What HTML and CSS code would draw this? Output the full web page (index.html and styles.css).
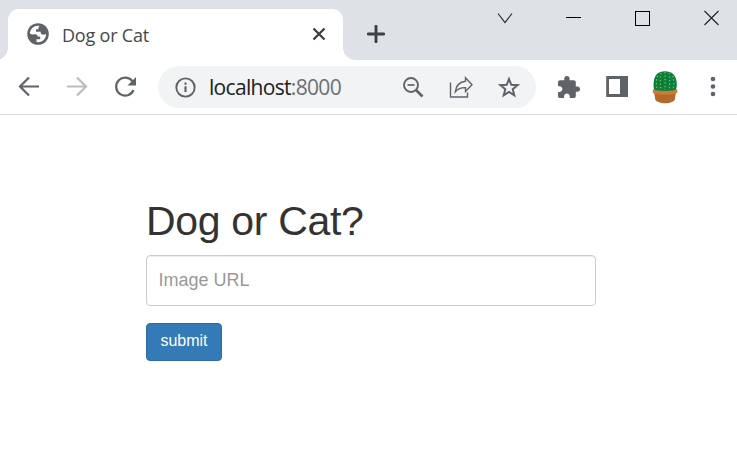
FILE: index.html
```html
<!DOCTYPE html>
<html lang="en">
<head>
<meta charset="utf-8">
<title>Dog or Cat</title>
<link rel="stylesheet" href="styles.css">
</head>
<body>
<div class="browser">
  <header class="strip">
    <div class="flare flare-left"></div>
    <div class="tab">
      <svg class="favicon" viewBox="0 0 22 22"><circle cx="11" cy="11" r="10.800" fill="#5f6368"/><path d="M12.500 2.800C7.500 2 3.500 5.200 2.800 10.200c1.500 1.300 3.500 1.400 5 1.100 1.800-.2 3.200.8 2.700 2.200h2.700v2.700H9.500v2.800c5.500 1 9.800-3.300 9.500-8.300-1 .9-2.400 1.200-3.700.7-1.400-.5-1.800-1.500-1.800-2.700H9V6.300h2.300c0-1.200.4-2.600 1.200-3.500z" fill="#fff"/></svg>
      <span class="tab-title">Dog or Cat</span>
      <svg class="tab-close" viewBox="0 0 14 14"><path d="M1.500 1.500l11 11M12.500 1.500l-11 11" stroke="#3c4043" stroke-width="2.300"/></svg>
    </div>
    <div class="flare flare-right"></div>
    <svg class="new-tab" viewBox="0 0 18 18"><path d="M9 1.200v15.600M1.200 9h15.600" stroke="#3c4043" stroke-width="2.900" stroke-linecap="round"/></svg>
    <div class="window-controls">
      <svg viewBox="0 0 16 16"><path d="M1 3.500l7 9 7-9" fill="none" stroke="#222" stroke-width="1.100"/></svg>
      <svg viewBox="0 0 16 16" shape-rendering="crispEdges"><path d="M0 7.500h15" stroke="#000"/></svg>
      <svg viewBox="0 0 16 16" shape-rendering="crispEdges"><path d="M.5 1.500h14v14H.5z" fill="none" stroke="#000"/></svg>
      <svg viewBox="0 0 16 16"><path d="M.5 1l14 14M14.500 1l-14 14" stroke="#222" stroke-width="1.100"/></svg>
    </div>
  </header>
  <nav class="toolbar">
    <div class="slot"><svg class="icon" viewBox="0 0 30 30"><path d="M25 14.500H6.500M15 5.500l-9 9 9 9" fill="none" stroke="#5f6368" stroke-width="2.200"/></svg></div>
    <div class="slot"><svg class="icon" viewBox="0 0 30 30"><path d="M5 14.500h18.500M15 5.500l9 9-9 9" fill="none" stroke="#babcbe" stroke-width="2.200"/></svg></div>
    <div class="slot"><svg class="icon" viewBox="0 0 30 30"><path d="M22.600 9.500A9 9 0 1 0 23.500 18" fill="none" stroke="#5f6368" stroke-width="2.200"/><path d="M26 5v8.500h-8.500z" fill="#5f6368"/></svg></div>
    <div class="omnibox">
      <svg class="info" viewBox="0 0 22 22"><circle cx="11" cy="11" r="9.600" fill="none" stroke="#5f6368" stroke-width="2"/><path d="M11 9.800v6M11 5.800v2.300" stroke="#5f6368" stroke-width="2.200"/></svg>
      <span class="url">localhost<span class="port">:8000</span></span>
      <div class="slot"><svg class="icon" viewBox="0 0 30 30"><g fill="none" stroke="#5f6368"><circle cx="13" cy="13" r="7" stroke-width="1.900"/><path d="M18 18l6.500 6.500" stroke-width="2.600"/><path d="M9.500 13h7" stroke-width="1.700"/></g></svg></div>
      <div class="slot"><svg class="icon" viewBox="0 0 30 30"><g fill="none" stroke="#5f6368" stroke-width="1.400"><path d="M4.500 10.500V25h17v-4.500"/><path d="M19.500 5.800l6.500 7-6.500 6.800v-4c-4.500-.1-7.700 1-10.200 4.200.8-6.300 3.800-10 10.200-10.600z"/></g></svg></div>
      <div class="slot"><svg class="icon" viewBox="0 0 30 30"><path d="M15 7l2.300 5.800 6.300.4-4.900 4 1.600 6.200-5.300-3.400-5.300 3.400 1.600-6.200-4.900-4 6.300-.4z" fill="none" stroke="#5f6368" stroke-width="2"/></svg></div>
    </div>
    <div class="slot"><svg class="puzzle" viewBox="2 1 21 21"><path fill="#5f6368" d="M20.500 11H19V7c0-1.100-.9-2-2-2h-4V3.500a2.500 2.500 0 0 0-5 0V5H4c-1.100 0-1.990.9-1.990 2v3.800H3.500c1.490 0 2.700 1.210 2.700 2.700s-1.210 2.700-2.700 2.700H2V20c0 1.100.9 2 2 2h3.800v-1.500c0-1.490 1.210-2.700 2.700-2.700s2.700 1.210 2.700 2.700V22H17c1.100 0 2-.9 2-2v-4h1.500a2.500 2.500 0 0 0 0-5z"/></svg></div>
    <div class="slot"><svg class="panel" viewBox="0 0 22 22"><path fill="#5f6368" fill-rule="evenodd" d="M.2 0H22v21H.2zM3 3v15h11V3z"/></svg></div>
    <div class="slot"><svg class="cactus" viewBox="0 0 26 34"><path d="M2.500 21c-1-3-1.200-6-.7-9.500C2.500 5 6 1.200 13 1.200S23.800 5 24.600 11.500c.5 3.500 0 6.500-1 9.500z" fill="#0b7f3e"/><g fill="none" stroke="#a3c44f" stroke-width="1.100" stroke-dasharray="1.300 2.200"><path d="M13 2v18M9 3c-1 4-1 11 0 17M17 3c1 4 1 11 0 17M5.500 6C4 10 4 16 5.500 20M20.700 6c1.500 4 1.500 10 0 14"/></g><path d="M2 22h22l-1.200 7.500c-2.500 5-17 5-19.500 0z" fill="#b4682a"/><path d="M.8 19c3 2.500 21.400 2.500 24.400 0v3.700c-3 2.800-21.400 2.800-24.400 0z" fill="#c97c35"/></svg></div>
    <div class="slot"><svg class="icon" viewBox="0 0 30 30" fill="#5f6368"><circle cx="15" cy="7" r="2.300"/><circle cx="15" cy="14.500" r="2.300"/><circle cx="15" cy="22" r="2.300"/></svg></div>
  </nav>
  <main class="page">
    <h1>Dog or Cat?</h1>
    <input class="field" type="text" placeholder="Image URL">
    <button class="submit" type="button">submit</button>
  </main>
</div>
</body>
</html>
```
FILE: styles.css
```css
* { box-sizing: border-box; }
body { margin: 0; background: #fff; }
svg { display: block; flex: none; }
.browser { width: 737px; height: 458px; overflow: hidden; }

.strip { display: flex; height: 60px; background: #dee1e6; overflow: hidden; }
.flare { flex: none; align-self: flex-end; height: 12px; }
.flare-left { width: 8px; background: radial-gradient(circle at -4px 0, transparent 11.5px, #fff 12.200px); }
.flare-right { width: 12px; background: radial-gradient(circle at 12px 0, transparent 11.5px, #fff 12.200px); }
.tab {
  display: flex; align-items: center; flex: none;
  width: 335px; height: 51px; margin-top: 9px; padding: 0 17.5px 2px 19px;
  background: #fff; border-radius: 11px 11px 0 0;
}
.favicon { width: 22px; height: 22px; }
.tab-title {
  flex: 1; margin-left: 13px; padding-top: 2px;
  font: 18px/24px "Open Sans", sans-serif; letter-spacing: -0.2px; color: #45484c;
}
.tab-close { width: 14px; height: 14px; }
.new-tab { width: 18px; height: 18px; margin: 25px 0 0 11.5px; }
.window-controls { display: flex; flex: none; gap: 53px; margin: 10px 0 0 112.5px; }
.window-controls svg { width: 16px; height: 16px; }

.toolbar { display: flex; align-items: center; height: 55px; padding-left: 5px; border-bottom: 1px solid #dadce0; }
.slot { display: flex; flex: none; justify-content: center; width: 48px; }
.icon { width: 30px; height: 30px; }
.omnibox {
  display: flex; align-items: center; flex: none;
  width: 378px; height: 42px; margin: 0 9px; padding: 0 3px 0 17px;
  background: #f1f3f4; border-radius: 21px;
}
.info { width: 21px; height: 21px; }
.url { flex: 1; margin-left: 13px; font: 21px/28px "Open Sans", sans-serif; letter-spacing: -0.68px; color: #202124; }
.port { color: #6c7075; }
.puzzle { width: 22px; height: 22px; }
.panel { width: 22px; height: 22px; }
.cactus { width: 26px; height: 34px; }

.page { display: flex; flex-direction: column; align-items: flex-start; padding: 82px 0 0 146px; font-family: "Liberation Sans", Arial, sans-serif; }
h1 { margin: 0 0 10px; font-size: 41px; line-height: 48px; font-weight: 400; letter-spacing: -0.32px; color: #333; }
.field {
  width: 450px; height: 51px; padding: 0 11.5px;
  border: 1px solid #ccc; border-radius: 4px; box-shadow: inset 0 1px 1px rgba(0,0,0,.075);
  font: 18px "Liberation Sans", Arial, sans-serif; color: #555;
}
.field::placeholder { color: #999; opacity: 1; }
.submit {
  width: 76px; height: 38px; margin-top: 17px; padding: 0 0 2px;
  border: 1px solid #2e6da4; border-radius: 4px; background: #337ab7;
  font: 16px "Liberation Sans", Arial, sans-serif; color: #fff;
}
```
